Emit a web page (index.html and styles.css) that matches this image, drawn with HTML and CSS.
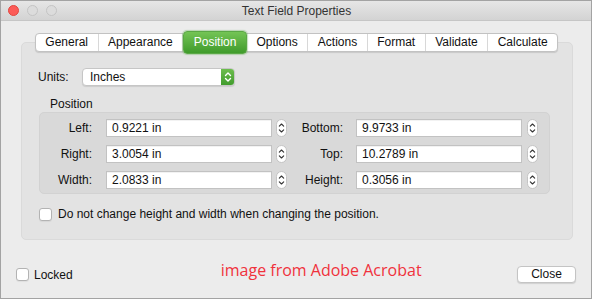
FILE: index.html
```html
<!DOCTYPE html>
<html>
<head>
<meta charset="utf-8">
<link rel="stylesheet" href="styles.css">
</head>
<body>
<div class="window">
  <div class="titlebar">
    <div class="lights">
      <span class="light red"></span>
      <span class="light gray"></span>
      <span class="light gray"></span>
    </div>
    <div class="title">Text Field Properties</div>
    <div></div>
  </div>
  <div class="main">
    <div class="tabsection">
      <div class="tabs">
        <div class="tab">General</div>
        <div class="tab">Appearance</div>
        <div class="tab active">Position</div>
        <div class="tab">Options</div>
        <div class="tab">Actions</div>
        <div class="tab">Format</div>
        <div class="tab">Validate</div>
        <div class="tab last">Calculate</div>
      </div>
      <div class="panel">
        <div class="units-row">
          <span class="units-label">Units:</span>
          <div class="select">
            <span class="select-text">Inches</span>
            <span class="select-btn">
              <svg width="14" height="18" viewBox="0 0 14 18"><path d="M4.5 7.5 L7 5 L9.5 7.5" fill="none" stroke="#fff" stroke-width="1.4" stroke-linecap="round" stroke-linejoin="round"/><path d="M4.5 10.5 L7 13 L9.5 10.5" fill="none" stroke="#fff" stroke-width="1.4" stroke-linecap="round" stroke-linejoin="round"/></svg>
            </span>
          </div>
        </div>
        <div class="legend">Position</div>
        <div class="group">
          <div class="grid">
            <span class="lbl">Left:</span>
            <div class="field">0.9221 in</div>
            <span class="stepper"><svg width="11" height="18" viewBox="0 0 11 18"><path d="M3.3 7.2 L5.5 5 L7.7 7.2" fill="none" stroke="#333" stroke-width="1.1" stroke-linecap="round" stroke-linejoin="round"/><path d="M3.3 10.8 L5.5 13 L7.7 10.8" fill="none" stroke="#333" stroke-width="1.1" stroke-linecap="round" stroke-linejoin="round"/></svg></span>
            <span class="lbl lbl2">Bottom:</span>
            <div class="field">9.9733 in</div>
            <span class="stepper s2"><svg width="11" height="18" viewBox="0 0 11 18"><path d="M3.3 7.2 L5.5 5 L7.7 7.2" fill="none" stroke="#333" stroke-width="1.1" stroke-linecap="round" stroke-linejoin="round"/><path d="M3.3 10.8 L5.5 13 L7.7 10.8" fill="none" stroke="#333" stroke-width="1.1" stroke-linecap="round" stroke-linejoin="round"/></svg></span>

            <span class="lbl">Right:</span>
            <div class="field">3.0054 in</div>
            <span class="stepper"><svg width="11" height="18" viewBox="0 0 11 18"><path d="M3.3 7.2 L5.5 5 L7.7 7.2" fill="none" stroke="#333" stroke-width="1.1" stroke-linecap="round" stroke-linejoin="round"/><path d="M3.3 10.8 L5.5 13 L7.7 10.8" fill="none" stroke="#333" stroke-width="1.1" stroke-linecap="round" stroke-linejoin="round"/></svg></span>
            <span class="lbl lbl2">Top:</span>
            <div class="field">10.2789 in</div>
            <span class="stepper s2"><svg width="11" height="18" viewBox="0 0 11 18"><path d="M3.3 7.2 L5.5 5 L7.7 7.2" fill="none" stroke="#333" stroke-width="1.1" stroke-linecap="round" stroke-linejoin="round"/><path d="M3.3 10.8 L5.5 13 L7.7 10.8" fill="none" stroke="#333" stroke-width="1.1" stroke-linecap="round" stroke-linejoin="round"/></svg></span>

            <span class="lbl">Width:</span>
            <div class="field">2.0833 in</div>
            <span class="stepper"><svg width="11" height="18" viewBox="0 0 11 18"><path d="M3.3 7.2 L5.5 5 L7.7 7.2" fill="none" stroke="#333" stroke-width="1.1" stroke-linecap="round" stroke-linejoin="round"/><path d="M3.3 10.8 L5.5 13 L7.7 10.8" fill="none" stroke="#333" stroke-width="1.1" stroke-linecap="round" stroke-linejoin="round"/></svg></span>
            <span class="lbl lbl2">Height:</span>
            <div class="field">0.3056 in</div>
            <span class="stepper s2"><svg width="11" height="18" viewBox="0 0 11 18"><path d="M3.3 7.2 L5.5 5 L7.7 7.2" fill="none" stroke="#333" stroke-width="1.1" stroke-linecap="round" stroke-linejoin="round"/><path d="M3.3 10.8 L5.5 13 L7.7 10.8" fill="none" stroke="#333" stroke-width="1.1" stroke-linecap="round" stroke-linejoin="round"/></svg></span>
          </div>
        </div>
        <div class="check-row">
          <span class="checkbox"></span>
          <span>Do not change height and width when changing the position.</span>
        </div>
      </div>
    </div>
    <div class="bottom-row">
      <div class="locked">
        <span class="checkbox"></span>
        <span>Locked</span>
      </div>
      <div class="credit">image from Adobe Acrobat</div>
      <div class="button">Close</div>
    </div>
  </div>
</div>
</body>
</html>
```

FILE: styles.css
```css
* { box-sizing: border-box; }
html, body { margin: 0; padding: 0; background: #ffffff; }
body {
  font-family: "Liberation Sans", Arial, sans-serif;
  font-size: 12px;
  color: #111111;
}
.window {
  width: 592px;
  height: 299px;
  border: 1px solid #a3a3a3;
  background: #ececec;
  display: flex;
  flex-direction: column;
}
.titlebar {
  height: 20px;
  flex: none;
  border-bottom: 1px solid #c6c6c6;
  background: linear-gradient(#e6e6e6, #d3d3d3);
  display: grid;
  grid-template-columns: 1fr auto 1fr;
  align-items: center;
}
.lights {
  display: flex;
  gap: 8px;
  padding-left: 7px;
}
.light {
  width: 11px;
  height: 11px;
  border-radius: 50%;
  display: block;
}
.light.red { background: #fc5b57; border: 1px solid #e2463f; }
.light.gray { background: #dcdcdc; border: 1px solid #c4c4c4; }
.title {
  font-size: 12px;
  color: #333333;
  padding-left: 1px;
}
.main {
  flex: 1;
  display: flex;
  flex-direction: column;
  padding-top: 12px;
}
.tabsection {
  margin-left: 20px;
  width: 552px;
  display: flex;
  flex-direction: column;
}
.tabs {
  align-self: center;
  display: flex;
  height: 19px;
  margin-bottom: -10px;
  position: relative;
  z-index: 1;
  background: #ffffff;
  border: 1px solid #c2c2c2;
  border-radius: 4px;
  box-shadow: 0 1px 1px rgba(0,0,0,0.12);
  margin-left: -1px;
}
.tab {
  padding: 0 9.5px;
  line-height: 17px;
  color: #111111;
  border-right: 1px solid #d8d8d8;
}
.tab.last { border-right: none; }
.tab.active {
  margin: -3px 0;
  height: 23px;
  line-height: 21px;
  color: #ffffff;
  background: linear-gradient(#74c455, #3f9b2b);
  border: 1px solid #5aa845;
  border-radius: 4px;
  box-shadow: 0 0 1px 1px rgba(80,170,60,0.35);
}
.panel {
  height: 198px;
  background: #e3e3e3;
  border: 1px solid #dadada;
  border-radius: 5px;
  padding: 25px 0 0 16px;
  display: flex;
  flex-direction: column;
}
.units-row {
  display: flex;
  align-items: center;
  height: 18px;
}
.units-label { width: 44px; }
.select {
  display: flex;
  width: 153px;
  height: 18px;
  background: #ffffff;
  border: 1px solid #c6c6c6;
  border-radius: 4px;
  box-shadow: 0 1px 1px rgba(0,0,0,0.1);
  overflow: hidden;
}
.select-text {
  flex: 1;
  padding-left: 7px;
  line-height: 16px;
}
.select-btn {
  width: 14px;
  background: linear-gradient(#6fbf4f, #3e9a2b);
  display: flex;
  align-items: center;
  justify-content: center;
  margin: -1px -1px -1px 0;
}
.legend {
  margin-top: 11px;
  line-height: 14px;
  padding-left: 12px;
}
.group {
  margin-top: 1px;
  margin-left: 1px;
  width: 511px;
  height: 82px;
  background: #d9d9d9;
  border: 1px solid #d2d2d2;
  border-radius: 5px;
  padding-top: 6px;
}
.grid {
  display: grid;
  grid-template-columns: 66px 166px 15px 69px 166px 16px;
  row-gap: 8px;
  align-items: center;
}
.lbl {
  text-align: right;
  padding-right: 14px;
}
.lbl2 { padding-right: 13px; }
.field {
  height: 18px;
  line-height: 16px;
  background: #ffffff;
  border: 1px solid #c2c2c2;
  box-shadow: inset 0 1px 0 rgba(0,0,0,0.05);
  padding-left: 5px;
}
.stepper {
  margin-left: 4px;
  width: 11px;
  height: 18px;
  display: block;
  background: #ffffff;
  border: 1px solid #c4c4c4;
  border-radius: 6px;
}
.stepper svg { display: block; margin: -1px; }
.stepper.s2 { margin-left: 5px; }
.check-row {
  margin-top: 13px;
  display: flex;
  align-items: center;
  gap: 6px;
  padding-left: 1px;
}
.checkbox {
  width: 13px;
  height: 13px;
  background: #ffffff;
  border: 1px solid #b3b3b3;
  border-radius: 3px;
  box-shadow: 0 1px 1px rgba(0,0,0,0.06);
  flex: none;
}
.bottom-row {
  margin-top: 25px;
  height: 19px;
  display: flex;
  align-items: center;
  padding: 0 15px;
}
.locked {
  display: flex;
  align-items: center;
  gap: 5px;
}
.credit {
  margin-left: 148px;
  font-family: "Open Sans", "Noto Sans", sans-serif;
  font-size: 16px;
  color: #f0323c;
  line-height: 19px;
  margin-top: -8px;
}
.button {
  margin-left: auto;
  width: 59px;
  height: 17px;
  line-height: 15px;
  text-align: center;
  background: #ffffff;
  border: 1px solid #c4c4c4;
  border-radius: 4px;
  box-shadow: 0 1px 1px rgba(0,0,0,0.12);
}
```
